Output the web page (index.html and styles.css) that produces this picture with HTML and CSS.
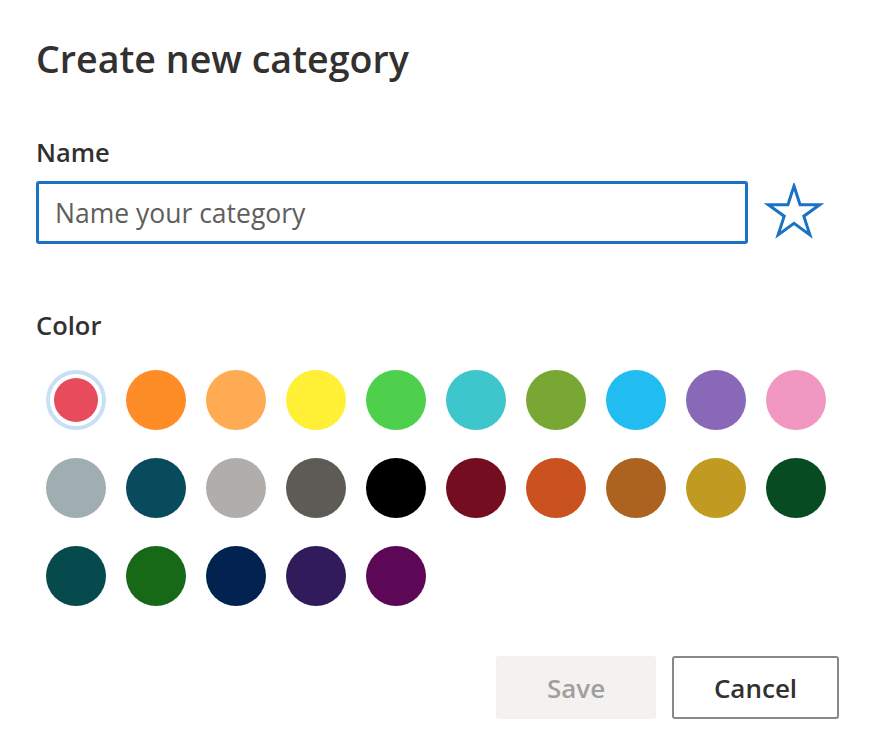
FILE: index.html
```html
<!DOCTYPE html>
<html lang="en">
<head>
    <meta charset="UTF-8">
    <meta name="viewport" content="width=device-width, initial-scale=1.0">
    <title>Create new category</title>
    <link rel="stylesheet" href="styles.css">
</head>
<body>
    <div class="dialog">
        <h1 class="dialog-title">Create new category</h1>

        <!-- Name field -->
        <label class="field-label" for="category-name">Name</label>
        <div class="name-row">
            <input type="text" id="category-name" class="name-input" placeholder="Name your category">
            <button class="fav-button" title="Add to favorites">
                <svg width="60" height="60" viewBox="0 0 60 60">
                    <polygon points="30,3 36.06,21.66 55.68,21.66 39.81,33.19 45.87,51.84 30,40.31 14.13,51.84 20.19,33.19 4.32,21.66 23.94,21.66" fill="none" stroke="#1a72c6" stroke-width="3" stroke-linejoin="miter"/>
                </svg>
            </button>
        </div>

        <!-- Color picker -->
        <div class="field-label color-label">Color</div>
        <div class="swatches">
            <span class="swatch selected"><span class="dot" style="background:#e64c5c"></span></span>
            <span class="swatch" style="background:#fe8c27"></span>
            <span class="swatch" style="background:#feab53"></span>
            <span class="swatch" style="background:#fff035"></span>
            <span class="swatch" style="background:#4fd04c"></span>
            <span class="swatch" style="background:#3dc6cb"></span>
            <span class="swatch" style="background:#78a833"></span>
            <span class="swatch" style="background:#21bdf0"></span>
            <span class="swatch" style="background:#8968b7"></span>
            <span class="swatch" style="background:#f198c2"></span>

            <span class="swatch" style="background:#a0aeb2"></span>
            <span class="swatch" style="background:#074b5d"></span>
            <span class="swatch" style="background:#b1adab"></span>
            <span class="swatch" style="background:#5e5b57"></span>
            <span class="swatch" style="background:#000000"></span>
            <span class="swatch" style="background:#750d20"></span>
            <span class="swatch" style="background:#ca5120"></span>
            <span class="swatch" style="background:#ab631f"></span>
            <span class="swatch" style="background:#c19a22"></span>
            <span class="swatch" style="background:#064b21"></span>

            <span class="swatch" style="background:#064a4e"></span>
            <span class="swatch" style="background:#176917"></span>
            <span class="swatch" style="background:#022250"></span>
            <span class="swatch" style="background:#321b5a"></span>
            <span class="swatch" style="background:#5c0856"></span>
        </div>

        <div class="actions">
            <button class="btn btn-save" disabled>Save</button>
            <button class="btn btn-cancel">Cancel</button>
        </div>
    </div>
</body>
</html>
```

FILE: styles.css
```css
body {
    margin: 0;
    padding: 0;
    background-color: #fff;
    color: #323130;
    font-family: "Open Sans", "Noto Sans", sans-serif;
}

.dialog {
    padding: 34px 35px 0 36px;
    display: flex;
    flex-direction: column;
}

.dialog-title {
    margin: 0;
    font-size: 37.6px;
    font-weight: 600;
    line-height: 50px;
}

.field-label {
    display: block;
    margin-top: 52px;
    font-size: 25.5px;
    font-weight: 600;
    line-height: 32px;
}

.name-row {
    display: flex;
    align-items: center;
    gap: 16px;
    margin-top: 13px;
}

.name-input {
    width: 712px;
    height: 63px;
    box-sizing: border-box;
    border: 3px solid #1a72c6;
    border-radius: 3px;
    padding: 0 16px;
    font-family: inherit;
    font-size: 26.5px;
    color: #323130;
    outline: none;
}

.name-input::placeholder {
    color: #605e5c;
}

.fav-button {
    background: none;
    border: none;
    padding: 0;
    width: 60px;
    height: 60px;
    cursor: pointer;
}

.fav-button svg {
    display: block;
}

.color-label {
    margin-top: 65px;
}

.swatches {
    display: grid;
    grid-template-columns: repeat(10, 60px);
    column-gap: 20px;
    row-gap: 28px;
    margin-top: 29px;
    padding-left: 10px;
}

.swatch {
    width: 60px;
    height: 60px;
    border-radius: 50%;
    cursor: pointer;
}

.swatch.selected {
    box-sizing: border-box;
    border: 4px solid #c7e0f4;
    padding: 4px;
}

.swatch .dot {
    display: block;
    width: 44px;
    height: 44px;
    border-radius: 50%;
}

.actions {
    display: flex;
    justify-content: flex-end;
    gap: 16px;
    margin-top: 50px;
}

.btn {
    height: 63px;
    box-sizing: border-box;
    border-radius: 3px;
    font-family: inherit;
    font-size: 26px;
    font-weight: 600;
    cursor: pointer;
}

.btn-save {
    width: 160px;
    background-color: #f3f2f1;
    border: none;
    color: #a19f9d;
    cursor: default;
}

.btn-cancel {
    width: 167px;
    background-color: #fff;
    border: 2px solid #8a8886;
    color: #323130;
}
```
